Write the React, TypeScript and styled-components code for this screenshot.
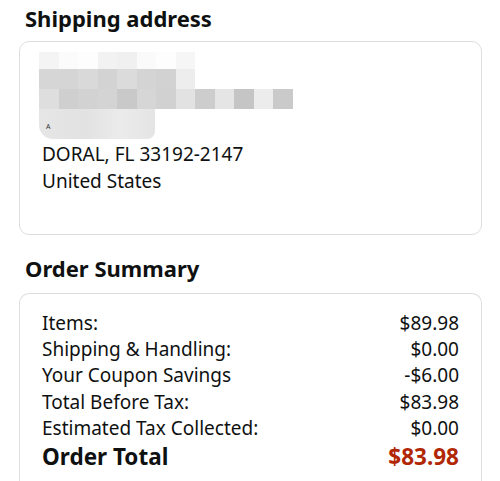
import React from "react";
import styled, { createGlobalStyle } from "styled-components";

const GlobalStyle = createGlobalStyle`
  body {
    margin: 0;
    background: #ffffff;
    font-family: "Noto Sans", "Open Sans", Arial, sans-serif;
    color: #0f1111;
  }
`;

const Page = styled.div`
  width: 500px;
  height: 481px;
  overflow: hidden;
  padding: 0 18px 0 19px;
  box-sizing: border-box;
`;

const Heading = styled.h2`
  margin: 0;
  padding-left: 6px;
  font-size: 22px;
  font-weight: 700;
  line-height: 36px;
  color: #0f1111;
`;

const Card = styled.div<{ $top: number }>`
  margin-top: ${p => p.$top}px;
  border: 1px solid #dedede;
  border-radius: 10px;
  padding: 0 22px;
  box-sizing: border-box;
`;

const AddressCard = styled(Card)`
  height: 194px;
  padding-top: 10px;
`;

const Mosaic = styled.div`
  position: relative;
  height: 86px;
  margin-left: -3px;
`;

const MosaicRow = styled.div<{ $h: number }>`
  display: flex;
  height: ${p => p.$h}px;
`;

const Cell = styled.div`
  width: 19.5px;
  height: 100%;
`;

const Smudge = styled.div`
  width: 116px;
  height: 30px;
  background: linear-gradient(90deg, #e6e6e6 0%, #e2e2e2 40%, #ebebeb 70%, #e4e4e4 100%);
  border-radius: 0 0 8px 14px;
`;

const Glyph = styled.span`
  position: absolute;
  left: 7px;
  top: 70px;
  font-size: 7px;
  color: #333;
`;

const AddressLine = styled.div`
  font-size: 19px;
  line-height: 27px;
`;

const AddressBody = styled.div`
  margin-top: 3px;
`;

const SummaryCard = styled(Card)`
  padding-top: 16px;
  padding-bottom: 20px;
  border-bottom: none;
  border-bottom-left-radius: 0;
  border-bottom-right-radius: 0;
`;

const Row = styled.div`
  display: flex;
  justify-content: space-between;
  font-size: 19px;
  line-height: 26.2px;
`;

const TotalRow = styled(Row)`
  font-size: 22.5px;
  font-weight: 700;
  line-height: 31px;
`;

const Price = styled.span<{ $red?: boolean }>`
  color: ${p => (p.$red ? "#b12704" : "inherit")};
`;

const rows1 = ["#f4f4f4", "#fbfbfb", "#fdfdfd", "#f2f2f2", "#f0f0f0", "#fafafa", "#fdfdfd", "#f6f6f6"];
const rows2 = ["#d6d6d6", "#d5d5d5", "#d9d9d9", "#d3d3d3", "#dbdbdb", "#d4d4d4", "#d2d2d2", "#ededed"];
const rows3 = [
  "#dedede", "#cfcfcf", "#d2d2d2", "#d4d4d4", "#c9c9c9", "#d6d6d6", "#d1d1d1",
  "#e2e2e2", "#cdcdcd", "#e5e5e5", "#c5c5c5", "#ececec", "#cacaca",
];

const summary: [string, string][] = [
  ["Items:", "$89.98"],
  ["Shipping & Handling:", "$0.00"],
  ["Your Coupon Savings", "-$6.00"],
  ["Total Before Tax:", "$83.98"],
  ["Estimated Tax Collected:", "$0.00"],
];

export default function App() {
  return (
    <>
      <GlobalStyle />
      <Page>
        <Heading>Shipping address</Heading>
        <AddressCard $top={5}>
          <Mosaic>
            <MosaicRow $h={17}>
              {rows1.map((c, i) => (
                <Cell key={i} style={{ background: c }} />
              ))}
            </MosaicRow>
            <MosaicRow $h={20}>
              {rows2.map((c, i) => (
                <Cell key={i} style={{ background: c }} />
              ))}
            </MosaicRow>
            <MosaicRow $h={20}>
              {rows3.map((c, i) => (
                <Cell key={i} style={{ background: c }} />
              ))}
            </MosaicRow>
            <Smudge />
            <Glyph>A</Glyph>
          </Mosaic>
          <AddressBody>
            <AddressLine>DORAL, FL 33192-2147</AddressLine>
            <AddressLine>United States</AddressLine>
          </AddressBody>
        </AddressCard>
        <Heading style={{ marginTop: 15 }}>Order Summary</Heading>
        <SummaryCard $top={7}>
          {summary.map(([label, value]) => (
            <Row key={label}>
              <span>{label}</span>
              <Price>{value}</Price>
            </Row>
          ))}
          <TotalRow>
            <span>Order Total</span>
            <Price $red>$83.98</Price>
          </TotalRow>
        </SummaryCard>
      </Page>
    </>
  );
}
